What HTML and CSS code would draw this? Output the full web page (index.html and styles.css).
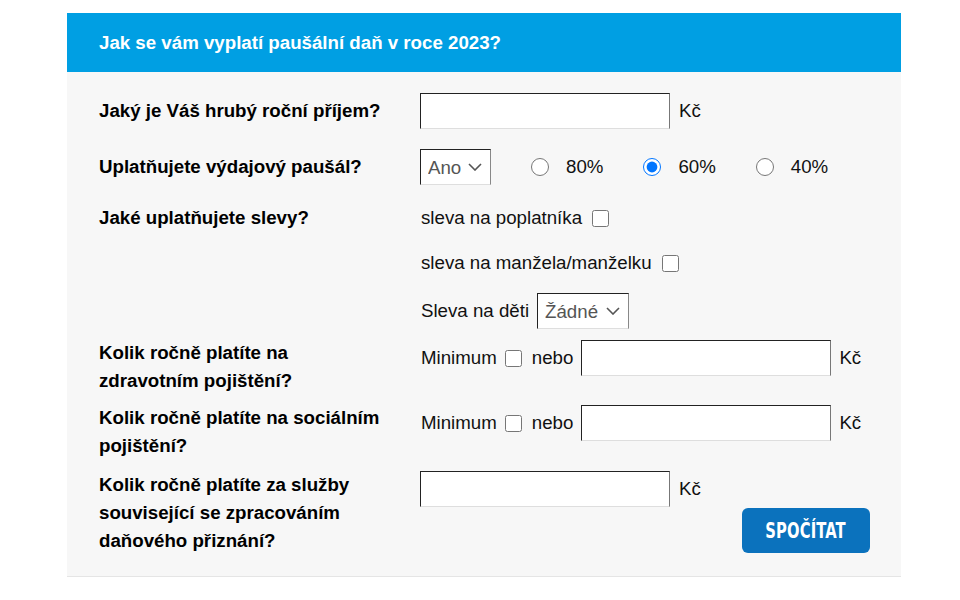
FILE: index.html
```html
<!DOCTYPE html>
<html lang="cs">
<head>
<meta charset="utf-8">
<title>Paušální daň</title>
<link rel="stylesheet" href="styles.css">
</head>
<body>
<div class="card">
  <div class="head">Jak se vám vyplatí paušální daň v roce 2023?</div>
  <div class="body">
    <div class="row r1">
      <div class="q">Jaký je Váš hrubý roční příjem?</div>
      <div class="a">
        <input class="txt" type="text"><span>Kč</span>
      </div>
    </div>
    <div class="row r2">
      <div class="q">Uplatňujete výdajový paušál?</div>
      <div class="a">
        <span class="selwrap sel-ano">
          <select class="sel"><option>Ano</option><option>Ne</option></select>
          <svg class="chev" width="14" height="8" viewBox="0 0 14 8"><path d="M1 1 L7 7 L13 1" fill="none" stroke="#555" stroke-width="1.6"/></svg>
        </span>
        <label class="rad"><input type="radio" name="p"><span>80%</span></label>
        <label class="rad"><input type="radio" name="p" checked><span>60%</span></label>
        <label class="rad"><input type="radio" name="p"><span>40%</span></label>
      </div>
    </div>
    <div class="row r3">
      <div class="q">Jaké uplatňujete slevy?</div>
      <div class="a col">
        <label class="chk-line l1"><span>sleva na poplatníka</span><input type="checkbox" class="chk"></label>
        <label class="chk-line l2"><span>sleva na manžela/manželku</span><input type="checkbox" class="chk"></label>
        <div class="chk-line l3"><span>Sleva na děti</span>
          <span class="selwrap sel-deti">
            <select class="sel"><option>Žádné</option><option>1</option><option>2</option><option>3</option></select>
            <svg class="chev" width="14" height="8" viewBox="0 0 14 8"><path d="M1 1 L7 7 L13 1" fill="none" stroke="#555" stroke-width="1.6"/></svg>
          </span>
        </div>
      </div>
    </div>
    <div class="row r4">
      <div class="q">Kolik ročně platíte na zdravotním pojištění?</div>
      <div class="a min">
        <span class="mintxt">Minimum</span><input type="checkbox" class="chk"><span class="nebo">nebo</span><input class="txt" type="text"><span>Kč</span>
      </div>
    </div>
    <div class="row r5">
      <div class="q">Kolik ročně platíte na sociálním pojištění?</div>
      <div class="a min">
        <span class="mintxt">Minimum</span><input type="checkbox" class="chk"><span class="nebo">nebo</span><input class="txt" type="text"><span>Kč</span>
      </div>
    </div>
    <div class="row r6">
      <div class="q">Kolik ročně platíte za služby související se zpracováním daňového přiznání?</div>
      <div class="a col last">
        <div class="inrow"><input class="txt" type="text"><span>Kč</span></div>
        <button class="btn" type="button"><span class="btntxt">SPOČÍTAT</span></button>
      </div>
    </div>
  </div>
</div>
</body>
</html>
```
FILE: styles.css
```css
html, body {
  margin: 0;
  padding: 0;
  background: #ffffff;
}
body {
  font-family: "Liberation Sans", Arial, sans-serif;
  font-size: 18.7px;
  color: #111;
}
.card {
  width: 834px;
  margin: 13px 0 0 67px;
}
.head {
  height: 59px;
  line-height: 59px;
  padding-left: 32px;
  background: #009fe3;
  color: #fff;
  font-weight: bold;
  font-size: 18.7px;
}
.body {
  background: #f7f7f7;
  padding: 21px 31px 21px 32px;
  border-bottom: 1px solid #e5e5e5;
}
.row {
  display: grid;
  grid-template-columns: 321px 1fr;
}
.q {
  font-weight: bold;
  line-height: 28px;
  color: #000;
  padding-right: 34px;
}
.a {
  display: flex;
  align-items: center;
  line-height: 28px;
}
.r1, .r2 { align-items: center; }
.r2 { margin-top: 20px; }
.r3 { margin-top: 19px; }
.r4 { margin-top: 10px; }
.r5 { margin-top: 9px; }
.r6 { margin-top: 11px; }
.r4 .a, .r5 .a, .r6 .a { align-self: start; padding-top: 1px; }
.r6 .a { padding-top: 0; }

.txt {
  box-sizing: border-box;
  width: 250px;
  height: 36px;
  margin: 0 9px 0 0;
  padding: 0 8px;
  background: #fff;
  border: 1px solid #222;
  border-right-color: #777;
  border-bottom-color: #dedede;
  font: 18px "Liberation Sans", Arial, sans-serif;
  outline: none;
}
.selwrap {
  position: relative;
  display: inline-block;
  height: 36px;
}
.sel {
  -webkit-appearance: none;
  appearance: none;
  box-sizing: border-box;
  width: 100%;
  height: 36px;
  margin: 0;
  padding: 0 0 0 7px;
  background-color: #fff;
  border: 1px solid #222;
  border-right-color: #888;
  border-bottom-color: #dedede;
  border-radius: 0;
  color: #555;
  font: 18.7px "Liberation Sans", Arial, sans-serif;
  outline: none;
}
.chev {
  position: absolute;
  right: 9px;
  top: 14px;
  pointer-events: none;
}
.sel-ano { width: 71px; }
.sel-deti { width: 92px; margin-left: 8px; }

.rad {
  display: flex;
  align-items: center;
  margin-left: 40px;
}
.rad input {
  width: 18px;
  height: 18px;
  margin: 0 17px 0 0;
}

.col {
  flex-direction: column;
  align-items: flex-start;
}
.chk-line {
  display: flex;
  align-items: center;
  height: 28px;
  padding-left: 1px;
}
.l2 { margin-top: 17px; }
.l3 { margin-top: 16px; height: 36px; }
.chk {
  width: 17px;
  height: 17px;
  margin: 0 0 0 10px;
}
.min .mintxt { margin-left: 1px; }
.min .chk { margin: 0 10px 0 8px; }
.min .nebo { margin-right: 8px; }
.min .txt { margin-right: 8px; }

.inrow {
  display: flex;
  align-items: center;
}
.last { align-items: stretch; }
.btn {
  align-self: flex-end;
  margin-top: 1px;
  width: 128px;
  height: 45px;
  background: #0b72bd;
  color: #fff;
  border: none;
  border-radius: 6px;
  padding: 0;
  overflow: hidden;
}
.btntxt {
  display: inline-block;
  font-family: "DejaVu Sans Condensed", "DejaVu Sans", sans-serif;
  font-weight: bold;
  font-size: 21px;
  transform: scaleX(0.78);
  letter-spacing: 0.2px;
}
```
